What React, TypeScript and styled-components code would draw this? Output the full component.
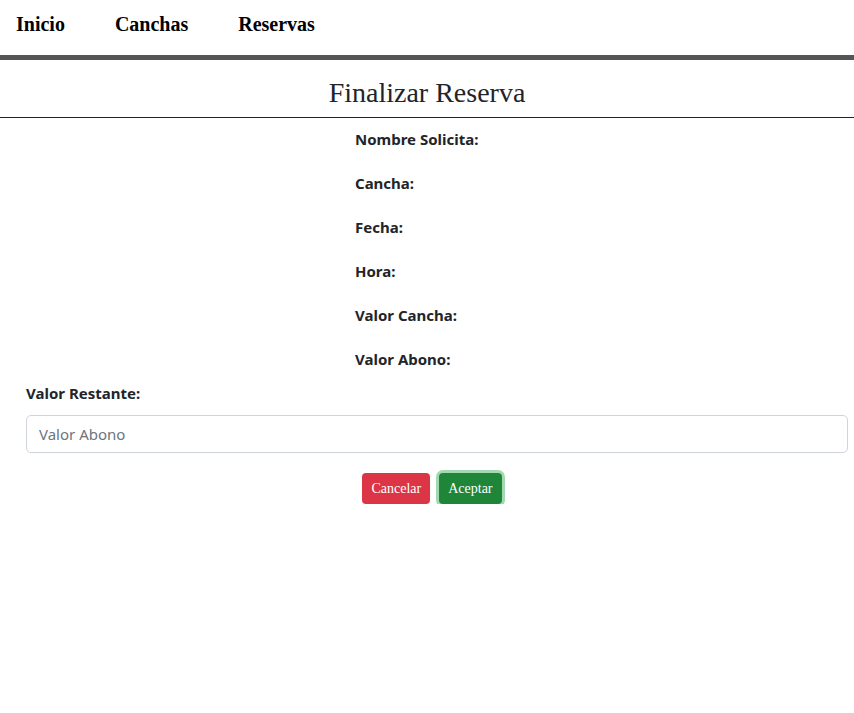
import styled, { createGlobalStyle } from 'styled-components'

const GlobalStyle = createGlobalStyle`
  body {
    margin: 0;
    background: #fff;
    color: #212529;
  }
`

const NavBar = styled.nav`
  display: flex;
  align-items: center;
  gap: 50px;
  height: 55px;
  padding: 0 16px;
  border-bottom: 5px solid #555555;
`

const NavLink = styled.a`
  font-family: 'Liberation Serif', 'Times New Roman', serif;
  font-size: 20px;
  font-weight: bold;
  color: #000;
  text-decoration: none;
  line-height: 1;
  margin-top: -7px;
`

const Title = styled.h1`
  margin: 0;
  padding-top: 9px;
  font-family: 'Liberation Serif', 'Times New Roman', serif;
  font-weight: normal;
  font-size: 28px;
  line-height: 48px;
  text-align: center;
  color: #212529;
  border-bottom: 1px solid #212529;
`

const Details = styled.div`
  display: flex;
  flex-direction: column;
  gap: 20px;
  padding: 9px 0 0 355px;
`

const Label = styled.label`
  display: block;
  font-family: 'Noto Sans', 'Open Sans', sans-serif;
  font-weight: bold;
  font-size: 15px;
  line-height: 24px;
  color: #212529;
`

const Form = styled.div`
  display: flex;
  flex-direction: column;
  padding: 10px 6px 0 26px;
`

const Input = styled.input`
  box-sizing: border-box;
  width: 100%;
  height: 38px;
  margin-top: 10px;
  padding: 6px 12px;
  font-family: 'Noto Sans', 'Open Sans', sans-serif;
  font-size: 15px;
  color: #212529;
  border: 1px solid #ced4da;
  border-radius: 5px;
  outline: none;
  &::placeholder {
    color: #6c757d;
  }
`

const Actions = styled.div`
  display: flex;
  justify-content: center;
  gap: 9px;
  margin-top: 20px;
  padding-right: 10px;
`

const Button = styled.button<{ $variant: 'danger' | 'success'; $focused?: boolean }>`
  height: 31px;
  padding: 0 9px;
  font-family: 'Liberation Serif', 'Times New Roman', serif;
  font-size: 14px;
  color: #fff;
  border: none;
  border-radius: 4px;
  background: ${({ $variant }) => ($variant === 'danger' ? '#dc3545' : '#1f8538')};
  box-shadow: ${({ $focused }) => ($focused ? '0 0 0 3px #a3d9b1' : 'none')};
  cursor: pointer;
`

export default function App() {
  return (
    <>
      <GlobalStyle />
      <NavBar>
        <NavLink href="#">Inicio</NavLink>
        <NavLink href="#">Canchas</NavLink>
        <NavLink href="#">Reservas</NavLink>
      </NavBar>
      <Title>Finalizar Reserva</Title>
      <Details>
        <Label>Nombre Solicita:</Label>
        <Label>Cancha:</Label>
        <Label>Fecha:</Label>
        <Label>Hora:</Label>
        <Label>Valor Cancha:</Label>
        <Label>Valor Abono:</Label>
      </Details>
      <Form>
        <Label>Valor Restante:</Label>
        <Input placeholder="Valor Abono" />
        <Actions>
          <Button $variant="danger">Cancelar</Button>
          <Button $variant="success" $focused>
            Aceptar
          </Button>
        </Actions>
      </Form>
    </>
  )
}
